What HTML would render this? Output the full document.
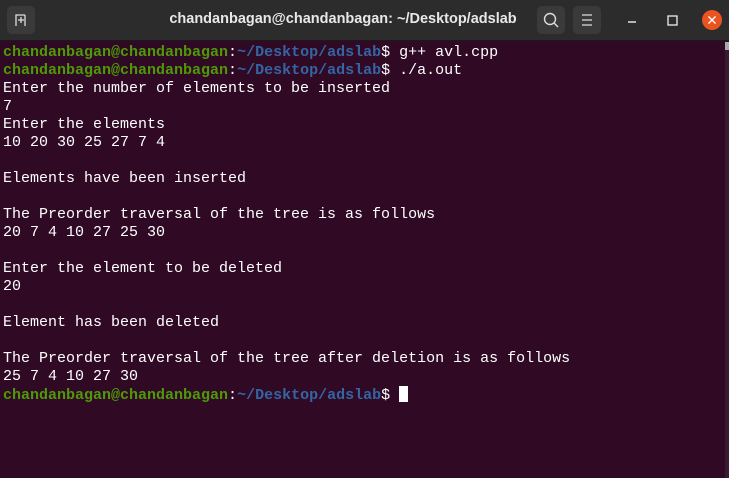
<!DOCTYPE html>
<html><head><style>
html,body{margin:0;padding:0;width:729px;height:478px;overflow:hidden;background:#300a24;}
.hdr{position:absolute;left:0;top:0;width:729px;height:40px;background:#2c2c2c;border-bottom:1px solid #1a1a1a;}
.btn{position:absolute;top:6px;width:28px;height:28px;background:#3a3a3a;border-radius:5px;}
.title{position:absolute;left:0;width:686px;top:11px;text-align:center;color:#e8e8e8;font:bold 14.5px "Liberation Sans",sans-serif;}
pre{position:absolute;left:3px;top:44px;margin:0;font:15px/18px "Liberation Mono",monospace;color:#ffffff;}
.g{color:#4e9a06;font-weight:bold}.b{color:#3465a4;font-weight:bold}
.cur{display:inline-block;width:9px;height:16px;background:#fff;vertical-align:-3px;}
.sb{position:absolute;left:725px;top:42px;width:4px;height:436px;background:#3a1a30;}
.sbt{position:absolute;left:725px;top:42px;width:4px;height:8px;background:#aaa;}
</style></head><body>
<div class="hdr">
 <div class="btn" style="left:7px"><svg width="28" height="28"><path d="M9 20V9h9M14 11v6M11 14h6M18 9v11" stroke="#ddd" stroke-width="1.3" fill="none"/></svg></div>
 <div class="title">chandanbagan@chandanbagan: ~/Desktop/adslab</div>
 <div class="btn" style="left:537px"><svg width="28" height="28"><circle cx="13" cy="13" r="5.5" stroke="#ddd" stroke-width="1.4" fill="none"/><path d="M17 17l4 4" stroke="#ddd" stroke-width="1.4"/></svg></div>
 <div class="btn" style="left:573px"><svg width="28" height="28"><path d="M9 9h10M9 14h10M9 19h10" stroke="#ddd" stroke-width="1.3"/></svg></div>
 <svg style="position:absolute;left:620px;top:10px" width="109" height="22"><path d="M8 12h8" stroke="#eee" stroke-width="1.4"/><rect x="48" y="6" width="9" height="9" stroke="#eee" stroke-width="1.3" fill="none"/><circle cx="92" cy="10" r="10" fill="#e95420"/><path d="M88.5 6.5l7 7M95.5 6.5l-7 7" stroke="#fff" stroke-width="1.4"/></svg>
</div>
<div class="sb"></div><div class="sbt"></div>
<pre><span class="g">chandanbagan@chandanbagan</span>:<span class="b">~/Desktop/adslab</span>$ g++ avl.cpp
<span class="g">chandanbagan@chandanbagan</span>:<span class="b">~/Desktop/adslab</span>$ ./a.out
Enter the number of elements to be inserted
7
Enter the elements
10 20 30 25 27 7 4

Elements have been inserted

The Preorder traversal of the tree is as follows
20 7 4 10 27 25 30

Enter the element to be deleted
20

Element has been deleted

The Preorder traversal of the tree after deletion is as follows
25 7 4 10 27 30
<span class="g">chandanbagan@chandanbagan</span>:<span class="b">~/Desktop/adslab</span>$ <span class="cur"></span></pre>
</body></html>
